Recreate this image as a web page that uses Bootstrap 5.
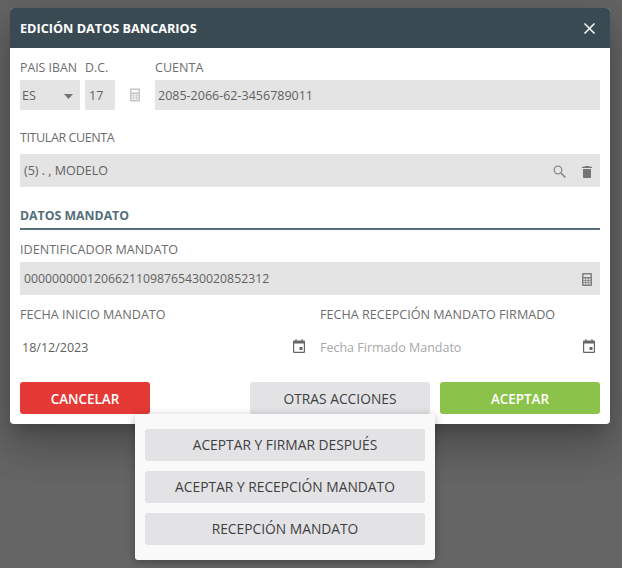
<!DOCTYPE html>
<html lang="es"><head><meta charset="utf-8"><title>Edición datos bancarios</title>
<link rel="stylesheet" href="https://cdn.jsdelivr.net/npm/bootstrap@5.3.0/dist/css/bootstrap.min.css">
<style>
html,body{height:100%;overflow:hidden}
body{background:#656565;font-family:"Open Sans","Noto Sans",sans-serif;font-size:12.5px;color:#616161;position:relative}
.dlg{width:600px;height:416px;margin:8px 0 0 10px;background:#fff;border-radius:4px;box-shadow:0 11px 15px -7px rgba(0,0,0,.2),0 24px 38px 3px rgba(0,0,0,.14),0 9px 46px 8px rgba(0,0,0,.12)}
.dlg-head{height:40px;background:#3a4a52;color:#fff;padding:0 15px 0 10px;border-radius:4px 4px 0 0}
.dlg-title{font-size:12.7px;font-weight:700;margin:0;padding-top:2px}
.dlg-body{padding:0 10px}
.lbl{display:block;font-size:12.6px;line-height:16px;color:#6d6d6d;margin:0 0 -1px;padding-top:1px}
.lbl-t{letter-spacing:-.45px}
.lbl-p{font-size:12.3px}
.fld{background:#e4e4e4;color:#616161;font-size:12.5px;display:flex;align-items:center;padding:2px 4px 0}
.h30{height:30px;margin-top:5px;padding:2px 3px 0}
.h30b{padding-left:4px}
.h30a{padding-left:2px}
.h33{height:33px}
.num{font-size:12.25px}
.r1{padding-top:11px;gap:5px}
.w60{width:60px}.w30{width:30px}
.calc-slot{width:30px}
.grow{flex:1 1 0;min-width:0}
.col-a{width:285px}
.lab-t{margin-top:19px;margin-bottom:8px}
.lab-i{margin-top:11px;margin-bottom:4px}
.sect{font-size:12.3px;font-weight:700;color:#546e7a;line-height:16px;margin-top:20px;padding-top:1px;padding-bottom:4px;border-bottom:2px solid #546e7a}
.cols{margin-top:11px;gap:15px}
.date-row{height:36px;margin-top:7px;padding:2px 0 0 2px}
.date-b{padding:2px 5px 0 0}
.ico-up{margin-top:-4px}
.hint{color:#a8a8a8}
.acts{margin-top:17px}
.act{height:32px;border:0;border-radius:3px;font-size:13.8px;font-weight:500;padding:2px 0 0;text-align:center}
.act-red{width:130px;background:#e53935;color:#fff;font-weight:600;font-size:13.4px}
.act-gray{width:180px;background:#e3e3e6;color:#404040;margin-right:10px}
.act-green{width:160px;background:#8bc34a;color:#fff;font-weight:600;font-size:13.4px}
.pop{position:absolute;left:135px;top:414px;width:300px;height:146px;background:#f9f9f9;border-radius:3px;padding:15px 10px;box-shadow:0 2px 8px rgba(0,0,0,.3);gap:10px}
.pop .act{width:280px;display:block;padding-top:0}
</style></head><body>
<svg width="0" height="0" class="position-absolute"><defs>
<symbol id="calc" viewBox="0 0 10 13"><path fill-rule="evenodd" d="M1 0h8a1 1 0 0 1 1 1v11a1 1 0 0 1-1 1H1a1 1 0 0 1-1-1V1a1 1 0 0 1 1-1zM1.500 1.500v2.500h7V1.500zM1.500 5.500V7h1.800V5.500zM4.100 5.500V7h1.800V5.500zM6.700 5.500V7h1.800V5.500zM1.500 7.800v1.500h1.800V7.800zM4.100 7.800v1.500h1.800V7.800zM6.700 7.800v1.500h1.800V7.800zM1.500 10v1.500h1.800V10zM4.100 10v1.500h1.800V10zM6.700 10v1.500h1.800V10z"/></symbol>
<symbol id="cal" viewBox="0 0 12 14"><path fill-rule="evenodd" d="M2.500 0h1v1.500h5V0h1v1.500H11a1 1 0 0 1 1 1V13a1 1 0 0 1-1 1H1a1 1 0 0 1-1-1V2.500a1 1 0 0 1 1-1h1.500zM1.200 4.500v8.300h9.600V4.500zM6.500 8h3v3h-3z"/></symbol>
</defs></svg>
<div class="dlg d-flex flex-column">
 <div class="dlg-head d-flex align-items-center justify-content-between">
  <h1 class="dlg-title">EDICIÓN DATOS BANCARIOS</h1>
  <svg width="11" height="11" viewBox="0 0 11 11"><path d="M.5.500l10 10M10.500.500l-10 10" stroke="#fff" stroke-width="1.500"/></svg>
 </div>
 <div class="dlg-body flex-grow-1 d-flex flex-column">
  <div class="d-flex r1">
   <div class="w60"><span class="lbl lbl-p">PAIS IBAN</span><div class="fld h30 h30a"><span>ES</span><svg class="ms-auto me-1" width="9" height="5" viewBox="0 0 9 5"><path d="M0 0h9L4.500 5z" fill="#757575"/></svg></div></div>
   <div class="w30"><span class="lbl lbl-p">D.C.</span><div class="fld h30 h30b">17</div></div>
   <div class="calc-slot d-flex align-items-end justify-content-center"><svg class="mb-2" width="10" height="14" fill="#c4c4c4"><use href="#calc"/></svg></div>
   <div class="grow"><span class="lbl">CUENTA</span><div class="fld h30">2085-2066-62-3456789011</div></div>
  </div>
  <span class="lbl lbl-t lab-t">TITULAR CUENTA</span>
  <div class="fld h33"><span>(5) . , MODELO</span>
   <svg class="ms-auto" width="13" height="13" viewBox="0 0 13 13" fill="none" stroke="#8a8a8a"><circle cx="5" cy="5" r="3.800" stroke-width="1.300"/><path d="M8 8l4.300 4.300" stroke-width="1.700"/></svg>
   <svg width="10" height="12" viewBox="0 0 10 12" fill="#757575" class="ms-3 me-1"><path d="M3.200 0h3.600l.6.8H10V2H0V.8h2.600zM1 3h8v8a1 1 0 0 1-1 1H2a1 1 0 0 1-1-1z"/></svg>
  </div>
  <div class="sect">DATOS MANDATO</div>
  <span class="lbl lab-i">IDENTIFICADOR MANDATO</span>
  <div class="fld h33"><span class="num">00000000012066211098765430020852312</span><svg class="ms-auto me-1" width="10" height="13" fill="#808080"><use href="#calc"/></svg></div>
  <div class="d-flex cols">
   <div class="col-a"><span class="lbl">FECHA INICIO MANDATO</span><div class="d-flex align-items-center date-row"><span>18/12/2023</span><svg class="ms-auto ico-up" width="12" height="14" fill="#666"><use href="#cal"/></svg></div></div>
   <div class="grow"><span class="lbl">FECHA RECEPCIÓN MANDATO FIRMADO</span><div class="d-flex align-items-center date-row date-b"><span class="hint">Fecha Firmado Mandato</span><svg class="ms-auto ico-up" width="12" height="14" fill="#666"><use href="#cal"/></svg></div></div>
  </div>
  <div class="d-flex acts">
   <button class="act act-red me-auto" type="button">CANCELAR</button>
   <button class="act act-gray" type="button">OTRAS ACCIONES</button>
   <button class="act act-green" type="button">ACEPTAR</button>
  </div>
 </div>
</div>
<div class="pop d-flex flex-column">
 <button class="act act-gray m-0" type="button">ACEPTAR Y FIRMAR DESPUÉS</button>
 <button class="act act-gray m-0" type="button">ACEPTAR Y RECEPCIÓN MANDATO</button>
 <button class="act act-gray m-0" type="button">RECEPCIÓN MANDATO</button>
</div>
</body></html>
